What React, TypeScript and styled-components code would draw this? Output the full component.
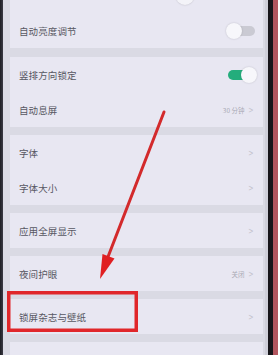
import React from "react";
import styled, { createGlobalStyle } from "styled-components";

const Global = createGlobalStyle`
  html, body { margin: 0; padding: 0; overflow: hidden; background: #dadae4; }
  #root { width: 278px; height: 355px; }
`;

const Page = styled.div`
  position: relative;
  width: 278px;
  height: 355px;
  display: flex;
  overflow: hidden;
  font-family: "Noto Sans CJK SC", "Noto Sans", sans-serif;
`;

const LeftBezel = styled.div`
  width: 3px;
  background: linear-gradient(90deg, #1c1c22, #3a3a44);
`;

const RightBezel = styled.div`
  width: 13px;
  display: flex;
`;

const BezelPart = styled.div<{ $c: string; $w: number }>`
  width: ${(p) => p.$w}px;
  background: ${(p) => p.$c};
`;

const Screen = styled.div`
  flex: 1;
  background: #dadae4;
  padding: 0 2px 0 7px;
  display: flex;
  flex-direction: column;
  gap: 8px;
`;

const Card = styled.div<{ $top?: number }>`
  background: #e8e7f2;
  display: flex;
  flex-direction: column;
  margin-top: ${(p) => p.$top ?? 0}px;
`;

const Row = styled.div`
  height: 35px;
  display: flex;
  align-items: center;
  padding: 0 8px 0 9px;
`;

const Label = styled.span`
  flex: 1;
  font-size: 9.5px;
  color: #575762;
  letter-spacing: 0.1px;
`;

const Value = styled.span`
  font-size: 6.5px;
  color: #a9a9b4;
  margin-right: 3px;
`;

const Chevron = styled.span`
  font-size: 9px;
  color: #c2c2cc;
  transform: scaleX(0.7);
  font-family: "DejaVu Sans", sans-serif;
`;

const Track = styled.div<{ $on?: boolean }>`
  position: relative;
  width: 27px;
  height: 10px;
  border-radius: 5px;
  background: ${(p) => (p.$on ? "#24ad7c" : "#cacad3")};
`;

const Thumb = styled.div<{ $on?: boolean }>`
  position: absolute;
  top: -3px;
  ${(p) => (p.$on ? "right: -2px;" : "left: -2px;")}
  width: 16px;
  height: 16px;
  border-radius: 50%;
  background: #f7f7fb;
  box-shadow: 0 0 2px rgba(0, 0, 0, 0.18);
`;

const Slider = styled.div`
  position: relative;
  flex: 1;
  height: 2px;
  background: #d2d2dc;
`;

const SliderThumb = styled.div`
  position: absolute;
  left: 157px;
  top: -8px;
  width: 18px;
  height: 18px;
  border-radius: 50%;
  background: #f3f3f8;
  box-shadow: 0 0 2px rgba(0, 0, 0, 0.2);
`;

const Overlay = styled.svg`
  position: absolute;
  left: 0;
  top: 0;
  pointer-events: none;
`;

const Toggle = ({ on }: { on?: boolean }) => (
  <Track $on={on}>
    <Thumb $on={on} />
  </Track>
);

const Nav = ({ label, value }: { label: string; value?: string }) => (
  <Row>
    <Label>{label}</Label>
    {value && <Value>{value}</Value>}
    <Chevron>&gt;</Chevron>
  </Row>
);

export default function App() {
  return (
    <>
      <Global />
      <Page>
        <LeftBezel />
        <Screen>
          <Card $top={-22}>
            <Row>
              <Slider>
                <SliderThumb />
              </Slider>
            </Row>
            <Row>
              <Label>自动亮度调节</Label>
              <Toggle />
            </Row>
          </Card>
          <Card $top={1}>
            <Row>
              <Label>竖排方向锁定</Label>
              <Toggle on />
            </Row>
            <Nav label="自动息屏" value="30 分钟" />
          </Card>
          <Card>
            <Nav label="字体" />
            <Nav label="字体大小" />
          </Card>
          <Card>
            <Nav label="应用全屏显示" />
          </Card>
          <Card>
            <Nav label="夜间护眼" value="关闭" />
          </Card>
          <Card>
            <Nav label="锁屏杂志与壁纸" />
          </Card>
          <Card>
            <Row />
          </Card>
        </Screen>
        <RightBezel>
          <BezelPart $c="#cfcfd9" $w={3} />
          <BezelPart $c="#17151a" $w={5} />
          <BezelPart $c="#b2555e" $w={5} />
        </RightBezel>
        <Overlay width="278" height="355" viewBox="0 0 278 355">
          <line x1="164" y1="112" x2="106" y2="262" stroke="#d32a2c" strokeWidth="3" strokeLinecap="round" />
          <polygon points="100,279 102.5,254 114.5,258.5" fill="#e01f22" />
          <rect x="8.75" y="292.75" width="127.5" height="37.5" fill="none" stroke="#e0262a" strokeWidth="3.5" />
        </Overlay>
      </Page>
    </>
  );
}
